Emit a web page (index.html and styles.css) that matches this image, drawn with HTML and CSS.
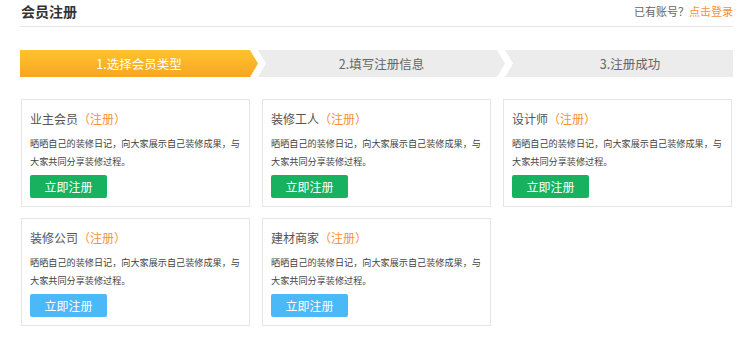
FILE: index.html
```html
<!DOCTYPE html>
<html>
<head>
    <meta charset="utf-8">
    <title>会员注册</title>
    <link rel="stylesheet" href="styles.css">
</head>
<body>
    <div class="page">
        <!-- header -->
        <div class="head">
            <h2 class="title">会员注册</h2>
            <span class="login">已有账号？<a href="#">点击登录</a></span>
        </div>

        <!-- steps -->
        <div class="steps">
            <div class="step step1 on">1.选择会员类型</div>
            <div class="step step2">2.填写注册信息</div>
            <div class="step step3">3.注册成功</div>
        </div>

        <!-- member types -->
        <div class="cards">
            <div class="card">
                <div class="card-title">业主会员<span class="reg">（注册）</span></div>
                <p class="desc">晒晒自己的装修日记，向大家展示自己装修成果，与大家共同分享装修过程。</p>
                <a href="#" class="btn green">立即注册</a>
            </div>
            <div class="card">
                <div class="card-title">装修工人<span class="reg">（注册）</span></div>
                <p class="desc">晒晒自己的装修日记，向大家展示自己装修成果，与大家共同分享装修过程。</p>
                <a href="#" class="btn green">立即注册</a>
            </div>
            <div class="card">
                <div class="card-title">设计师<span class="reg">（注册）</span></div>
                <p class="desc">晒晒自己的装修日记，向大家展示自己装修成果，与大家共同分享装修过程。</p>
                <a href="#" class="btn green">立即注册</a>
            </div>
            <div class="card">
                <div class="card-title">装修公司<span class="reg">（注册）</span></div>
                <p class="desc">晒晒自己的装修日记，向大家展示自己装修成果，与大家共同分享装修过程。</p>
                <a href="#" class="btn blue">立即注册</a>
            </div>
            <div class="card">
                <div class="card-title">建材商家<span class="reg">（注册）</span></div>
                <p class="desc">晒晒自己的装修日记，向大家展示自己装修成果，与大家共同分享装修过程。</p>
                <a href="#" class="btn blue">立即注册</a>
            </div>
        </div>
    </div>
</body>
</html>
```

FILE: styles.css
```css
body { margin: 0; background: #fff; font-family: "Noto Sans CJK SC", "Liberation Sans", sans-serif; color: #555 }
a { text-decoration: none }

.page { width: 713px; margin-left: 20px }

.head { display: flex; justify-content: space-between; align-items: center; height: 22px; padding-bottom: 4px; border-bottom: 1px solid #e6e6e6 }
.title { margin: 0 0 0 1px; font-size: 14px; font-weight: bold; color: #333 }
.login { font-size: 11px; color: #666 }
.login a { color: #f7913c }

.steps { display: flex; height: 27px; margin-top: 23px }
.step { height: 27px; line-height: 27px; font-size: 12.5px; color: #666; background: #ececec; text-align: center }
.step.on { color: #fff; background: linear-gradient(#fdc42b, #f9a424) }
.step1 { width: 238px; clip-path: polygon(0 0, 230px 0, 100% 50%, 230px 100%, 0 100%) }
.step2 { width: 247px; clip-path: polygon(0 0, calc(100% - 8px) 0, 100% 50%, calc(100% - 8px) 100%, 0 100%, 8px 50%) }
.step3 { width: 228px; padding-left: 22px; box-sizing: border-box; clip-path: polygon(0 0, 100% 0, 100% 100%, 0 100%, 8px 50%) }

.cards { display: grid; grid-template-columns: repeat(3, 229px); column-gap: 12px; row-gap: 11px; margin-top: 22px; margin-left: 1px }
.card { height: 108px; box-sizing: border-box; border: 1px solid #e6e6e6; padding: 11px 8px 0 8px }
.card-title { font-size: 12px; line-height: 16px; color: #555 }
.reg { color: #f7913c }
.desc { margin: 7px 0 5px 0; font-size: 9.15px; line-height: 18px; color: #444 }
.btn { display: block; width: 77px; height: 23px; line-height: 23px; border-radius: 2px; text-align: center; font-size: 12px; color: #fff }
.green { background: #17b160 }
.blue { background: #4bb8f8 }
```
